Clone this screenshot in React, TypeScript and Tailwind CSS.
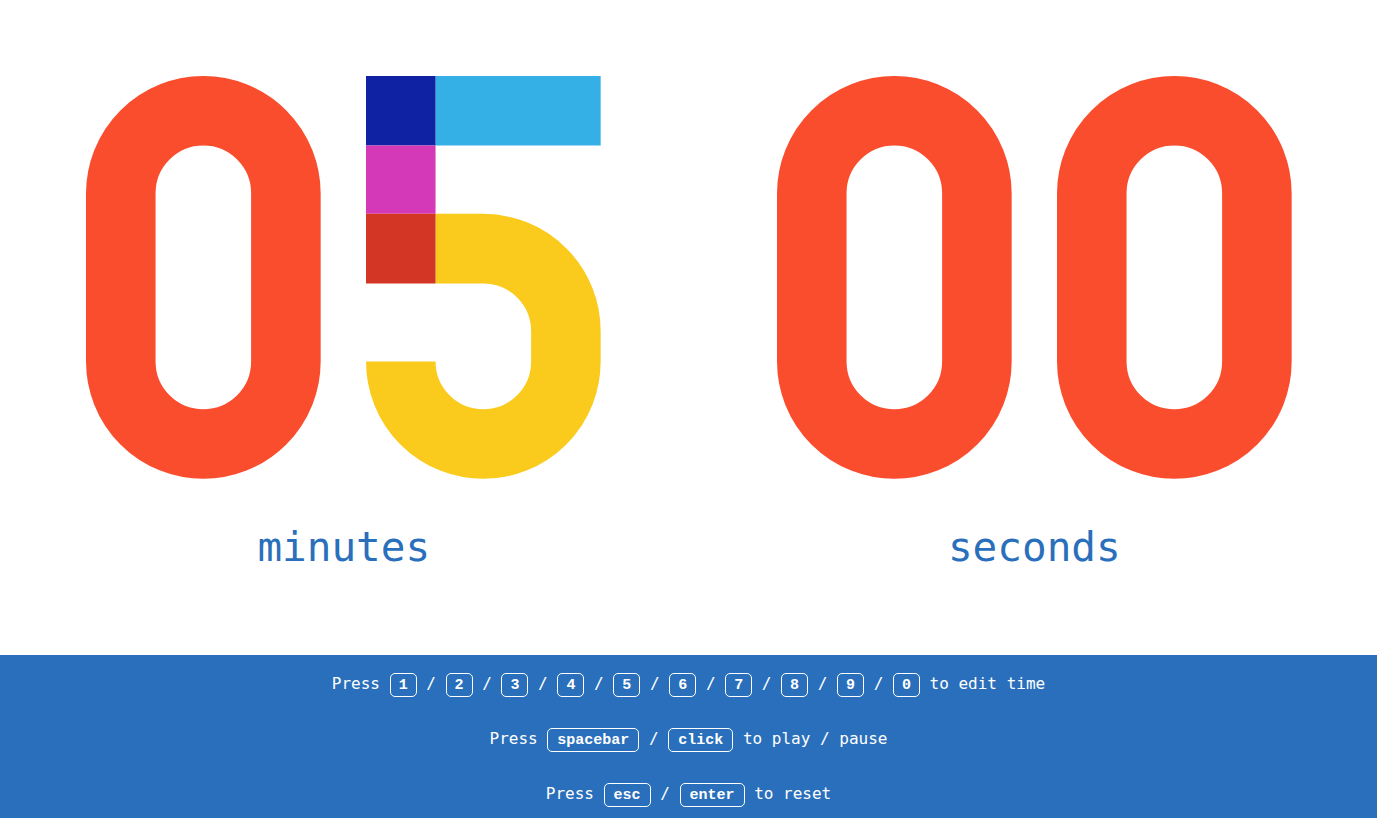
import { Fragment } from "react";

function Zero() {
  return (
    <svg viewBox="0 0 234.5 402.5" className="block min-w-0 flex-1" aria-label="0" role="img">
      <path
        d="M34.75 117.25a82.5 82.5 0 0 1 165 0v168a82.5 82.5 0 0 1-165 0z"
        fill="none"
        stroke="#fa4d2d"
        strokeWidth="69.5"
      />
    </svg>
  );
}

function Five() {
  return (
    <svg viewBox="0 0 234.5 402.5" className="block min-w-0 flex-1" aria-label="5" role="img">
      <path d="M69.5 0h165v69.5h-165z" fill="#35b0e7" />
      <path
        d="M69.5 172.5h47.75a82.5 82.5 0 0 1 82.5 82.5v30.25a82.5 82.5 0 0 1-165 0"
        fill="none"
        stroke="#facb1d"
        strokeWidth="69.5"
      />
      <path d="M0 0h69.5v69.5H0z" fill="#0f22a3" />
      <path d="M0 69.5h69.5v68.25H0z" fill="#d43ab8" />
      <path d="M0 137.75h69.5v69.5H0z" fill="#d33625" />
    </svg>
  );
}

function Label({ text }: { text: string }) {
  return (
    <h2 className="mt-10 text-center text-[41px] leading-[56px] text-[#2a6fbb] font-['DejaVu_Sans_Mono',monospace]">
      {text}
    </h2>
  );
}

function Key({ name }: { name: string }) {
  const padding = name.length > 1 ? "px-[9px]" : "px-2";
  return (
    <kbd
      className={`inline-flex h-6 items-center rounded-[5px] border border-white text-[15px] font-bold leading-none font-['Liberation_Mono',monospace] ${padding}`}
    >
      {name}
    </kbd>
  );
}

function Hint({ keys, action }: { keys: string[]; action: string }) {
  return (
    <li className="flex h-6 items-center justify-center whitespace-pre">
      <span className="pb-0.5">{"Press "}</span>
      {keys.map((key, index) => (
        <Fragment key={key}>
          {index > 0 && <span className="pb-0.5">{" / "}</span>}
          <Key name={key} />
        </Fragment>
      ))}
      <span className="pb-0.5">{" " + action}</span>
    </li>
  );
}

export default function App() {
  return (
    <div className="flex min-h-screen flex-col bg-white">
      <main className="flex flex-1 items-start gap-[14.6%] px-[6.2%] pt-[76px] pl-[6.28%]">
        <section className="flex-1">
          <div className="flex gap-[8.8%]">
            <Zero />
            <Five />
          </div>
          <Label text="minutes" />
        </section>
        <section className="flex-1">
          <div className="flex gap-[8.8%]">
            <Zero />
            <Zero />
          </div>
          <Label text="seconds" />
        </section>
      </main>
      <footer className="bg-[#2a6fbb] pt-[18px] pb-[11px] text-base text-white font-['DejaVu_Sans_Mono',monospace]">
        <ul className="flex flex-col gap-[31px]">
          <Hint keys={["1", "2", "3", "4", "5", "6", "7", "8", "9", "0"]} action="to edit time" />
          <Hint keys={["spacebar", "click"]} action="to play / pause" />
          <Hint keys={["esc", "enter"]} action="to reset" />
        </ul>
      </footer>
    </div>
  );
}
